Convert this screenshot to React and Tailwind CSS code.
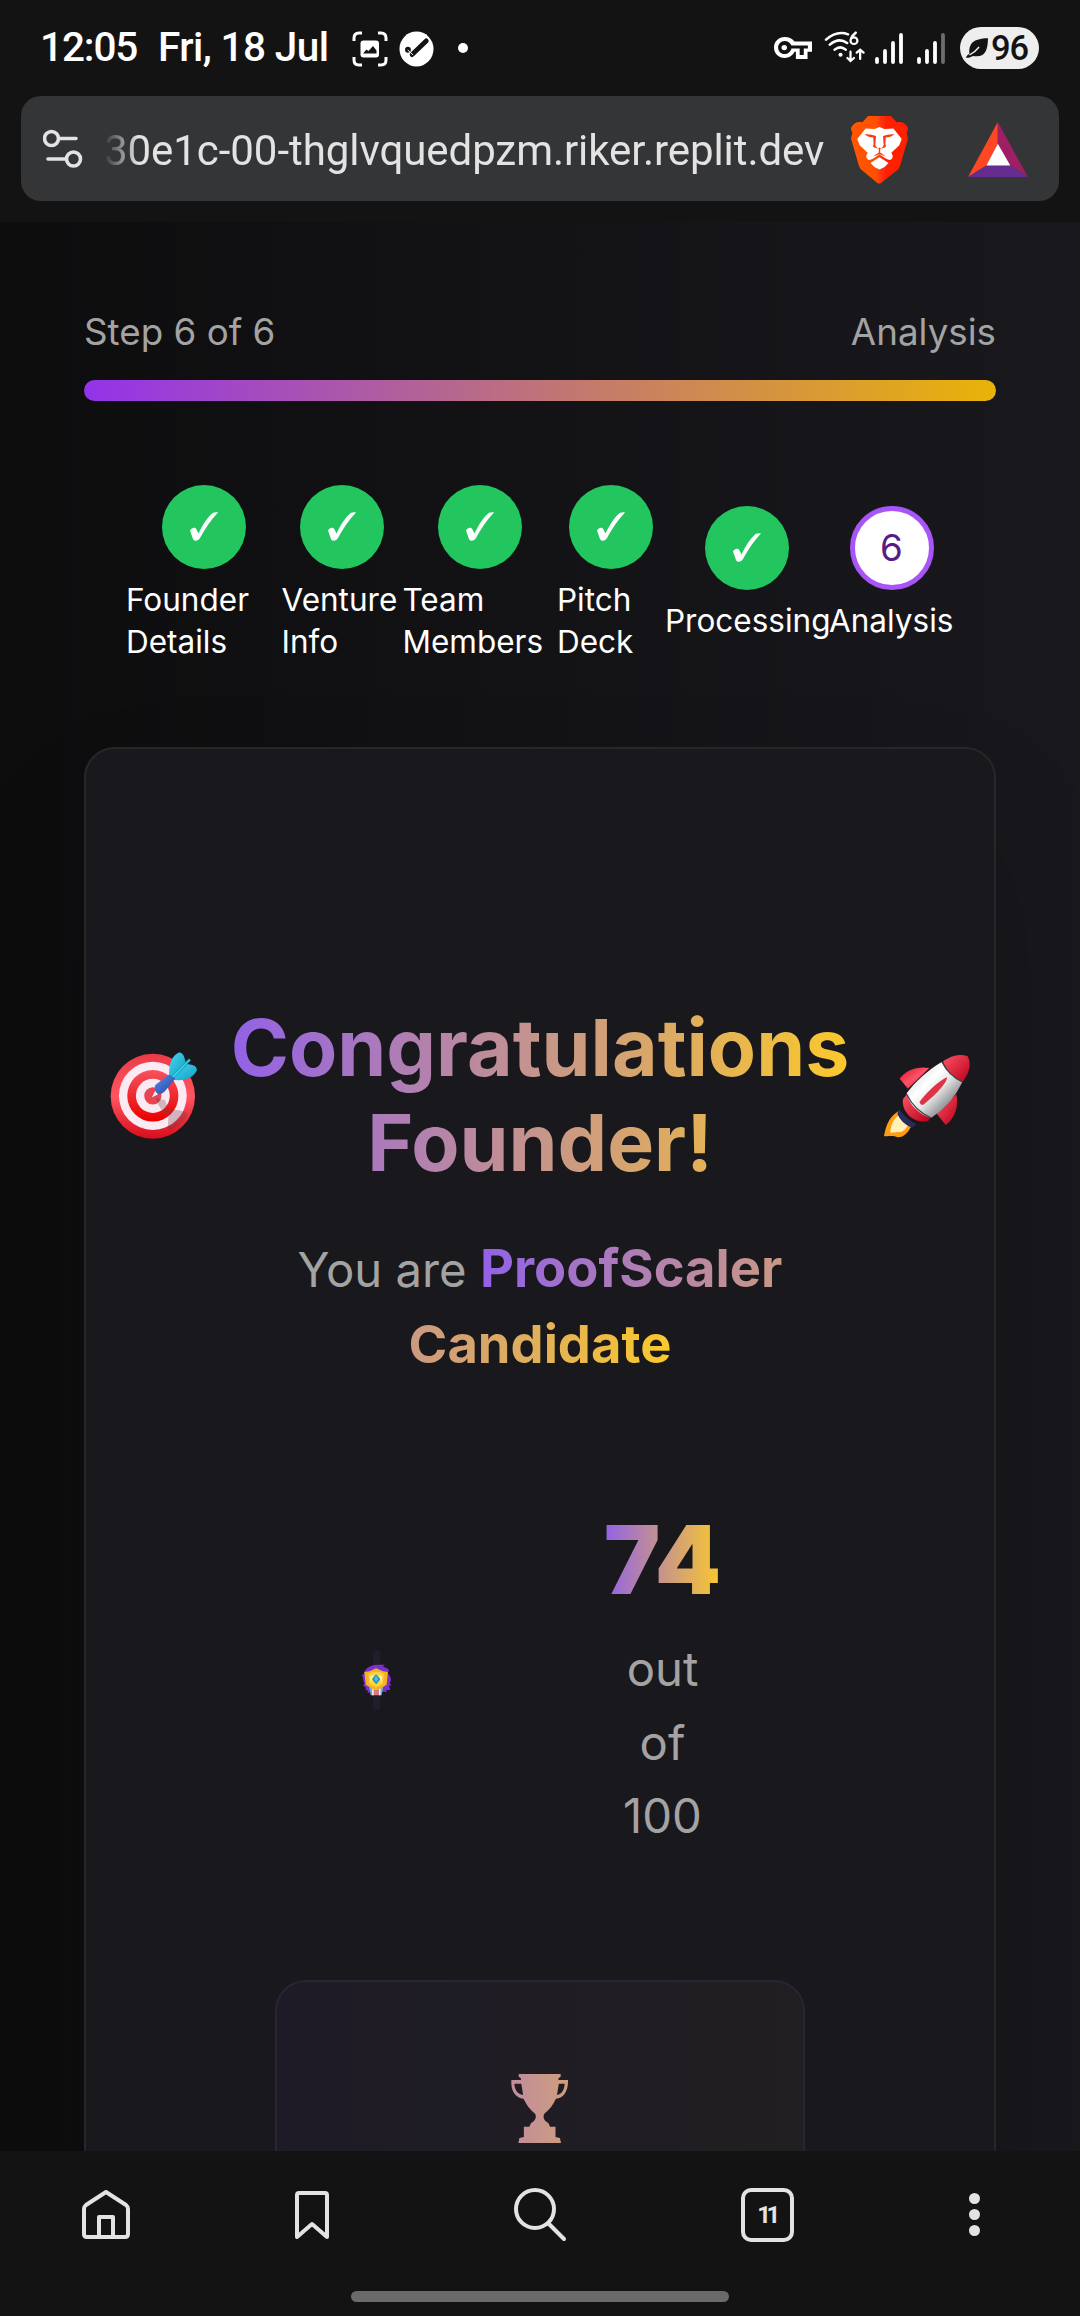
import React from "react";

function Glyph({ box, className, children }) {
  return (
    <svg viewBox={box} preserveAspectRatio="none" fill="none" className={`block shrink-0 ${className}`}>
      {children}
    </svg>
  );
}

function StatusBar() {
  return (
    <header className="flex h-24 items-start font-['Roboto',sans-serif] text-[40.5px] font-medium leading-[48px] text-white">
      <div className="ml-[40px] mt-[23px] w-[118px] whitespace-nowrap tracking-[-1.1px]">12:05</div>
      <div className="mt-[23px] w-[194px] whitespace-nowrap tracking-[-0.6px]">Fri, 18 Jul</div>
      <Glyph box="0 0 36 36" className="mt-[31px] h-9 w-9">
        <path
          d="M2 10V7q0-5 5-5h3M26 2h3q5 0 5 5v3M34 26v3q0 5-5 5h-3M10 34H7q-5 0-5-5v-3"
          stroke="#fff"
          strokeWidth="3"
        />
        <rect x="8.5" y="9.500" width="18.500" height="17" rx="3" fill="#fff" />
        <path d="M11 22.500l3.500-4 2 1.500 4.500-5 3.500 4.500v3z" fill="#131313" />
      </Glyph>
      <Glyph box="0 0 36 36" className="ml-[11px] mt-[31px] h-9 w-[35px]">
        <circle cx="18" cy="18" r="17.500" fill="#fff" />
        <path d="M13.500 23.500L28 10" stroke="#131313" strokeWidth="5" strokeLinecap="round" />
        <circle cx="9.200" cy="18.800" r="3" fill="#131313" />
        <path d="M9 19l5.500 5" stroke="#fff" strokeWidth="1" />
      </Glyph>
      <span className="ml-6 mt-[43px] h-2.5 w-2.5 rounded-full bg-white" />
      <Glyph box="679 111 111 67" className="ml-[306px] mt-[37px] h-[22px] w-[38px]">
        <path
          fill="#fff"
          fillRule="evenodd"
          d="M710 111c-17 0-31 14-31 32s14 32 31 32c13 0 24-8 29-19h4v22h34v-22h13v-31h-51c-5-9-16-14-29-14zm0 12c9 0 17 6 20 14h48v9h-12v20h-12v-20h-24c-3 10-10 17-20 17-11 0-19-9-19-20s8-20 19-20z"
        />
        <circle cx="709" cy="143" r="8" fill="#fff" />
      </Glyph>
      <Glyph box="826 95 122 96" className="ml-3 mt-[31px] h-8 w-[42px]">
        <g stroke="#fff" strokeWidth="7.500" strokeLinecap="round">
          <path d="M832 121q32-29 64-16M843 136q26-23 50-5M857 151q16-14 32 0" />
          <path d="M903 157v27M894 176l9 9 10-9M931 179v-27M921 160l10-9 10 9" strokeWidth="6.500" />
          <path d="M918 100q-10 8-13 17" />
          <circle cx="913" cy="124" r="10" strokeWidth="6.500" />
        </g>
        <circle cx="874" cy="166" r="6" fill="#fff" />
      </Glyph>
      <Glyph box="0 0 28 31" className="ml-[9px] mt-[33px] h-[31px] w-7">
        <path d="M2 26v3M10 18v11M18 10v19M26 2v27" stroke="#fff" strokeWidth="3.800" strokeLinecap="round" />
      </Glyph>
      <Glyph box="0 0 28 31" className="ml-3.5 mt-[33px] h-[31px] w-7">
        <path d="M2 26v3M10 18v11M18 10v19" stroke="#fff" strokeWidth="3.800" strokeLinecap="round" />
        <path d="M26 2v27" stroke="#6d6d6d" strokeWidth="3.800" strokeLinecap="round" />
      </Glyph>
      <div className="ml-[15px] mt-[27px] flex h-[42px] w-[79px] items-center rounded-full bg-[#eeeeee] pl-[6px] text-[34.5px] tracking-[-1.2px] text-[#131313]">
        <Glyph box="1238 113 64 60" className="mr-[3px] h-5 w-[22px]">
          <path d="M1248 160c-2-30 10-45 54-46-1 42-10 58-44 53-8 5-13 6-20 5 1-5 3-7 10-12z" fill="#131313" />
          <path d="M1248 164q16-8 28-24" stroke="#eeeeee" strokeWidth="4" />
        </Glyph>
        96
      </div>
    </header>
  );
}

function AddressBar() {
  return (
    <div className="mx-[21px] mb-[21px] flex h-[105px] items-center rounded-[20px] bg-[#343537]">
      <Glyph box="0 0 40 40" className="ml-[22px] mt-px h-10 w-10">
        <g stroke="#e3e3e3" strokeWidth="3.600" strokeLinecap="round">
          <circle cx="8.500" cy="9.500" r="7" />
          <path d="M16 9.500h17M5 30h17" />
          <circle cx="30.500" cy="30" r="7" />
        </g>
      </Glyph>
      <div className="ml-[21px] mt-[5px] w-[724px] whitespace-nowrap font-['Roboto',sans-serif] text-[42px] leading-[60px] tracking-[-0.06px] text-[#e3e3e3] [mask-image:linear-gradient(to_right,transparent,black_34px)]">
        30e1c-00-thglvquedpzm.riker.replit.dev
      </div>
      <Glyph box="905 345 164 203" className="ml-[23px] mt-0.5 h-[68px] w-[57px]">
        <defs>
          <linearGradient id="lion" x1="905" x2="1069" y1="0" y2="0" gradientUnits="userSpaceOnUse">
            <stop offset="0" stopColor="#ff5601" />
            <stop offset=".45" stopColor="#ff5000" />
            <stop offset=".5" stopColor="#ff3b14" />
            <stop offset=".62" stopColor="#ff2000" />
            <stop offset="1" stopColor="#ff2000" />
          </linearGradient>
        </defs>
        <path
          d="M954 345h66l16 19c14-4 26 1 34 18l-5 14 4 16-22 79q-3 12-13 19l-42 34q-6 5-12 0l-40-34q-10-7-13-19l-22-79 4-16-5-14c8-17 20-22 34-18z"
          fill="url(#lion)"
        />
        <path
          d="M947 382l26 2 14-6 14 6 26-2 24 32-7 18-23 23 4 8c1 8-3 12-9 13-9-1-17-9-29-16-12 7-20 15-29 16-6-1-10-5-9-13l4-8-23-23-7-18z"
          fill="#fff"
        />
        <path d="M987 468l26 17q-10 14-26 20-16-6-26-20z" fill="#fff" />
        <path
          d="M943 400q18-2 34 5l-2 27q2 8 12 11 10-3 12-11l-2-27q16-7 34-5-12 8-26 9l-1 20q4 6-2 10l-15 5-15-5q-6-4-2-10l-1-20q-14-1-26-9z"
          fill="#fb3c10"
        />
        <path d="M985 440h4v14l17 12-19-7-19 7 17-12z" fill="#fb3c10" />
      </Glyph>
      <Glyph box="1243 365 173 162" className="ml-[60px] mt-0.5 h-[55px] w-[60px]">
        <path d="M1329 365v64l-33 64-53 34z" fill="#ff4724" />
        <path d="M1329 365l87 162-51-34-36-64z" fill="#9e1f63" />
        <path d="M1243 527l53-34h69l51 34z" fill="#662d91" />
        <path d="M1329 429l36 64h-69z" fill="#fff" />
      </Glyph>
    </div>
  );
}

const steps = [
  { lines: ["Founder", "Details"], width: "w-[155.500px]" },
  { lines: ["Venture", "Info"], width: "w-[121px]" },
  { lines: ["Team", "Members"], width: "w-[154.500px]" },
  { lines: ["Pitch", "Deck"], width: "w-[108px]" },
  { lines: ["Processing"], width: "w-[164px]" },
  { lines: ["Analysis"], width: "w-[125px]", current: true },
];

function Stepper() {
  return (
    <div className="mx-[42px] mt-[84px] flex h-[178px] items-center">
      {steps.map((s, i) => (
        <div key={s.lines[0]} className={`${s.width} flex shrink-0 flex-col items-center`}>
          {s.current ? (
            <div className="flex h-[84px] w-[84px] items-center justify-center rounded-full border-[5px] border-[#a855f7] bg-white text-[36.75px] text-[#581c87]">
              {i + 1}
            </div>
          ) : (
            <div className="flex h-[84px] w-[84px] items-center justify-center rounded-full bg-[#22c55e]">
              <Glyph box="0 0 28 29" className="-mt-px h-[29px] w-7">
                <path
                  d="M0 18.500c2-3.500 5.500-3.500 6.500-1l2 4C13 12 18.500 4 23 .8 25 0 27 0 28 .500 20.500 8 15 17 10 26 8 29.500 4 29.500 3 27z"
                  fill="#fff"
                />
              </Glyph>
            </div>
          )}
          <div className="mt-2.5 w-full whitespace-nowrap text-[31.5px] leading-[42px] text-white">
            {s.lines.map((l) => (
              <div key={l}>{l}</div>
            ))}
          </div>
        </div>
      ))}
    </div>
  );
}

function Dartboard() {
  return (
    <Glyph box="120 218 262 260" className="h-[87px] w-[87px]">
      <defs>
        <linearGradient id="ringOuter" x1="0" x2="0" y1="0" y2="1">
          <stop offset="0" stopColor="#ec3a48" />
          <stop offset=".5" stopColor="#ff5560" />
          <stop offset="1" stopColor="#d80d1c" />
        </linearGradient>
        <linearGradient id="ringInner" x1="0" x2="0" y1="0" y2="1">
          <stop offset="0" stopColor="#f5525e" />
          <stop offset="1" stopColor="#ea0000" />
        </linearGradient>
        <linearGradient id="flight" x1="0" x2="1" y1="0" y2="1">
          <stop offset="0" stopColor="#4bd6ee" />
          <stop offset="1" stopColor="#0c9fc4" />
        </linearGradient>
        <linearGradient id="barrel" x1="0" x2="1" y1="0" y2="1">
          <stop offset="0" stopColor="#5e8de6" />
          <stop offset="1" stopColor="#1d45a8" />
        </linearGradient>
      </defs>
      <circle cx="249" cy="350" r="127" fill="url(#ringOuter)" />
      <circle cx="249" cy="349" r="102" fill="#fbeaf1" />
      <circle cx="249" cy="349" r="77" fill="url(#ringInner)" />
      <circle cx="249" cy="349" r="51" fill="#fbeaf1" />
      <circle cx="249" cy="349" r="26" fill="#e84451" />
      <path d="M256 354l30 8 10 28q30-2 58 10-10 36-60 53l2-45q-26-15-40-54z" fill="#6b3a44" opacity=".3" />
      <path d="M246 354l10-20 11 9z" fill="#f3f3f8" />
      <path d="M298 294c-2-34 6-64 28-74 12-3 18 10 22 30l-38 44z" fill="url(#flight)" />
      <path d="M306 300l46-46q30 2 30 18c-10 24-42 36-76 28z" fill="url(#flight)" />
      <path d="M302 294l56-56 5 5-54 56z" fill="#2fd0ea" stroke="#1482a8" strokeWidth="2" />
      <path d="M255 330q-3-11 6-17l37-28 19 12-33 40q-9 9-19 7-8-4-10-14z" fill="url(#barrel)" />
    </Glyph>
  );
}

function Rocket() {
  return (
    <Glyph box="1028 224 264 252" className="h-[84px] w-[88px]">
      <defs>
        <linearGradient id="hull" x1="1135" x2="1225" y1="285" y2="375" gradientUnits="userSpaceOnUse">
          <stop offset="0" stopColor="#e6e7ea" />
          <stop offset=".3" stopColor="#ffffff" />
          <stop offset=".6" stopColor="#e2e3e5" />
          <stop offset="1" stopColor="#8f9093" />
        </linearGradient>
        <linearGradient id="redPart" x1="0" x2="1" y1="0" y2="1">
          <stop offset="0" stopColor="#d3112c" />
          <stop offset=".5" stopColor="#ff5368" />
          <stop offset="1" stopColor="#c3001a" />
        </linearGradient>
        <linearGradient id="redDeep" x1="0" x2="1" y1="0" y2="1">
          <stop offset="0" stopColor="#ff5368" />
          <stop offset="1" stopColor="#b80018" />
        </linearGradient>
      </defs>
      <path d="M1074 396l42 38c-12 26-26 41-44 40-14-7-27-2-41-4 6-30 15-58 43-74z" fill="#ff9d12" />
      <path d="M1078 406l28 26c-9 16-17 28-30 26l-26 2c2-26 10-44 28-54z" fill="#fff1b8" />
      <path d="M1076 390q24 32 52 44-6 8-14 11-32-14-43-42z" fill="#272b5c" />
      <path d="M1103 328l-25-30c18-26 52-38 89-32z" fill="url(#redPart)" />
      <path d="M1188 402l60-57c8 36-4 72-32 92z" fill="url(#redDeep)" />
      <path d="M1100 344l68 72-4 9c-44 10-82-28-76-66z" fill="url(#redDeep)" />
      <path d="M1204 248q20 40 62 60-30 66-94 108c-32-8-66-38-73-74 28-38 62-68 105-94z" fill="url(#hull)" />
      <path d="M1208 246c24-18 50-24 74-15 13 26 3 54-16 77-28-12-48-34-58-62z" fill="url(#redDeep)" />
      <path d="M1205 248q20 40 61 60M1099 345q24 50 74 71" stroke="#42454c" strokeWidth="4" />
      <path d="M1138 367c20-26 54-60 81-73 6 8-26 48-70 82q-10 2-11-9z" fill="#dc3347" />
    </Glyph>
  );
}

function Badge() {
  return (
    <div className="flex h-[60px] w-[7px] items-center justify-center rounded-full bg-[#201d2c]">
      <Glyph box="94 133 92 96" className="h-8 w-[31px]">
        <path
          d="M112 146q14-12 32-11h20l-5 5 16 8 2 7-6 5q12 8 12 22l-4 9 6 6-8 1 4 14-12-2 2 7-38-2-20 5 2-8h-8l2-8q-10-4-8-10l4-2q-6-10-5-18l-4-8 6-2q0-10 10-18z"
          fill="#7a30cf"
        />
        <path d="M118 203h42l-5 24h-32z" fill="#6ea9da" />
        <path d="M127 205h5v22h-5zM147 205h5v22h-5z" fill="#f3f1f6" />
        <path d="M132 207h15v19h-15z" fill="#df777d" />
        <path d="M104 157l15-2 20-9 20 9 15 2-4 38-19 12-12 5-12-5-19-12z" fill="#f5b320" />
        <path d="M116 163q23-13 46 0l-3 30-20 10-20-10z" fill="#fcd23f" />
        <path d="M121 170l10-4-8 24zM157 170l-10-4 8 24z" fill="#fff3a8" />
        <path d="M139 164l12 15-12 15-12-15z" fill="#168fd0" />
        <path d="M139 167l6 12-6 8-6-8z" fill="#43c3ee" />
      </Glyph>
    </div>
  );
}

function Trophy() {
  return (
    <Glyph box="706 342 155 207" className="h-[69px] w-[57px]">
      <defs>
        <linearGradient id="cup" x1="706" x2="861" y1="0" y2="0" gradientUnits="userSpaceOnUse">
          <stop offset="0" stopColor="#c08d9c" />
          <stop offset="1" stopColor="#cf9d7d" />
        </linearGradient>
      </defs>
      <path
        fill="url(#cup)"
        fillRule="evenodd"
        d="M727 342h114v8l-6 5v5h26c1 30-10 54-33 56-7 18-17 32-32 46-4 12 0 20 12 28l4 10h15v31l12 3 3 15H726l3-15 12-3v-31h15l4-10c12-8 16-16 12-28-15-14-24-28-32-46-24-2-35-26-33-56h26v-5l-6-5zM715 371c1 19 9 31 24 34l-5-34zM852 371h-16l-5 34c13-3 20-15 21-34z"
      />
    </Glyph>
  );
}

function ResultCard() {
  const grad = "bg-linear-to-r/srgb from-[#9261e8] to-[#fbc92c] bg-clip-text text-transparent";
  return (
    <section className="mt-[84px] flex h-[1600px] shrink-0 flex-col items-center rounded-[31px] border-2 border-[#27272a] bg-[#19181c] shadow-[0_66px_131px_-31px_rgba(0,0,0,0.25)]">
      <div className="mt-[252px] flex w-full items-center justify-between pl-[24px] pr-[23px]">
        <Dartboard />
        <h1 className={`${grad} w-[620px] whitespace-nowrap text-center text-[78.75px] font-bold leading-[94.5px]`}>
          Congratulations
          <br />
          Founder!
        </h1>
        <Rocket />
      </div>
      <p className="mt-[41px] text-center text-[47.25px] leading-[73.5px] text-[#a3a3a3]">
        You are <span className={`${grad} text-[52.5px] font-bold leading-[74.5px]`}>ProofScaler<br />Candidate</span>
      </p>
      <div className="mt-[125px] flex w-full items-center">
        <div className="ml-[287px]">
          <Badge />
        </div>
        <div className="ml-[225px] flex w-[115px] flex-col items-center">
          <div className={`${grad} text-[94.5px] font-black leading-[105px]`}>74</div>
          <div className="mt-5 text-center text-[47.25px] leading-[73.5px] text-[#a3a3a3]">
            out
            <br />
            of
            <br />
            100
          </div>
        </div>
      </div>
      <div className="mt-[127px] flex h-[400px] w-[530px] flex-col items-center rounded-[31px] border-2 border-[#2b2434] bg-linear-to-r/srgb from-[#1e1b27] to-[#211f21]">
        <div className="mr-px mt-[92px]">
          <Trophy />
        </div>
      </div>
    </section>
  );
}

function BottomBar() {
  return (
    <footer className="h-[165px] bg-[#131313]">
      <nav className="flex h-[127px] items-center pl-[82px]">
        <Glyph box="0 0 48 49" className="h-[49px] w-12">
          <g stroke="#e3e3e3" strokeWidth="4" strokeLinejoin="round">
            <path d="M24 2l20 13q2 1.500 2 4v25q0 3-3 3H5q-3 0-3-3V19q0-2.500 2-4z" />
            <path d="M17 47V27h14v20" />
          </g>
        </Glyph>
        <Glyph box="0 0 34 48" className="ml-[165px] h-12 w-[34px]">
          <path
            d="M4 2h26q2 0 2 2v42L17 33 2 46V4q0-2 2-2z"
            stroke="#e3e3e3"
            strokeWidth="4"
            strokeLinejoin="round"
          />
        </Glyph>
        <Glyph box="0 0 53 54" className="ml-[185px] h-[54px] w-[53px]">
          <g stroke="#e3e3e3" strokeWidth="4" strokeLinecap="round">
            <circle cx="21" cy="21" r="19" />
            <path d="M35 36l15 15" />
          </g>
        </Glyph>
        <div className="ml-[174px] flex h-[54px] w-[53px] items-center justify-center rounded-[10px] border-4 border-[#e3e3e3] pr-[6px] font-['Roboto',sans-serif] text-[24px] font-bold tracking-[-4.5px] text-[#e3e3e3]">
          <span className="-mr-[4px]">11</span>
        </div>
        <div className="ml-[175px] flex flex-col gap-[5px]">
          <span className="h-[11px] w-[11px] rounded-full bg-[#e3e3e3]" />
          <span className="h-[11px] w-[11px] rounded-full bg-[#e3e3e3]" />
          <span className="h-[11px] w-[11px] rounded-full bg-[#e3e3e3]" />
        </div>
      </nav>
      <div className="mx-auto mt-[13px] h-[11px] w-[378px] rounded-full bg-[#6a6a6a]" />
    </footer>
  );
}

export default function App() {
  return (
    <div className="flex h-[2316px] w-[1080px] flex-col overflow-hidden bg-[#131313]">
      <StatusBar />
      <AddressBar />
      <main className="flex h-[1929px] shrink-0 flex-col overflow-hidden bg-linear-to-r/srgb from-[#0d0d0e] to-[#19181d] px-[84px] pt-[84px] font-['Inter',sans-serif]">
        <div className="flex shrink-0 justify-between text-[36.75px] leading-[52px] text-[#a3a3a3]">
          <span>Step 6 of 6</span>
          <span>Analysis</span>
        </div>
        <div className="mt-[22px] h-[21px] shrink-0 rounded-full bg-linear-to-r/srgb from-[#9333ea] to-[#eab308]" />
        <Stepper />
        <ResultCard />
      </main>
      <BottomBar />
    </div>
  );
}
